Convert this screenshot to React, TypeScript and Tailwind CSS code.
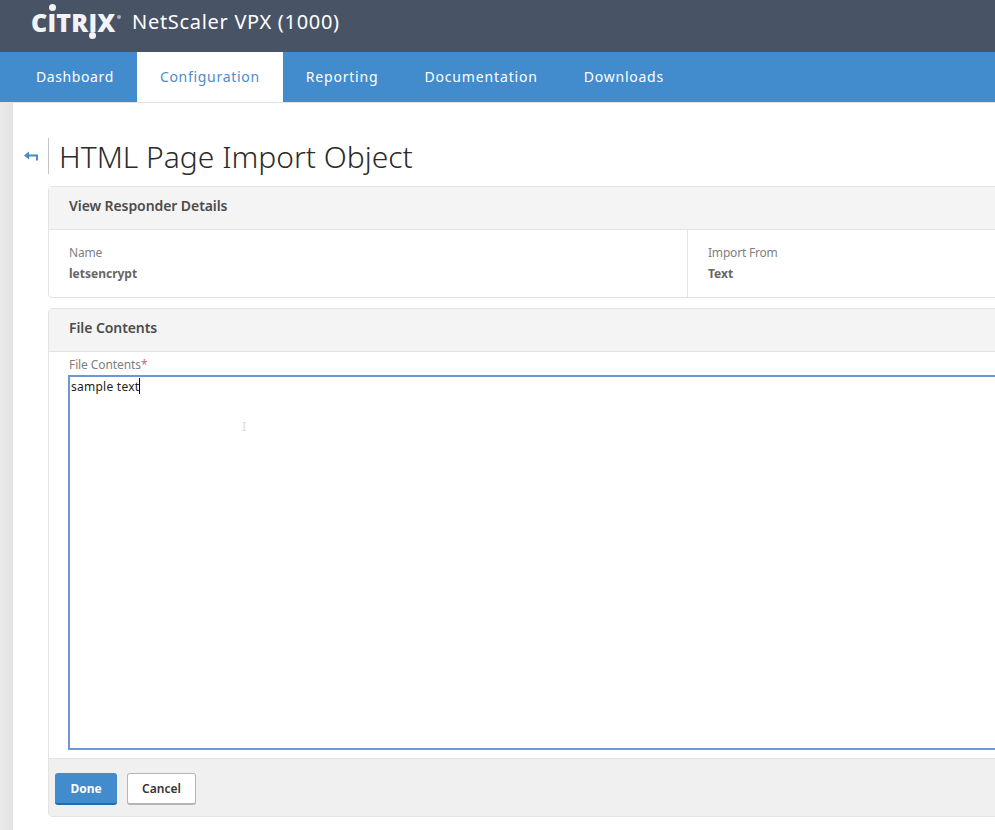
import React from "react";

const font = { fontFamily: '"Noto Sans", "Open Sans", sans-serif' };

function Logo() {
  return (
    <div className="relative w-[86px] h-[40px] mr-[10px] shrink-0">
      <span className="absolute left-[-1px] top-[5px] text-[25px] leading-[30px] font-extrabold tracking-[0.2px] text-[#f2f3f5]" style={{ fontFamily: '"Open Sans", sans-serif' }}>
        CITRIX
      </span>
      <span className="absolute left-[17px] top-[2px] w-[7px] h-[7px] rounded-full bg-[#f2f3f5]" />
      <span className="absolute left-[57px] top-[30px] w-[7px] h-[7px] rounded-full bg-[#f2f3f5]" />
      <span className="absolute left-[85px] top-[13px] w-[4px] h-[4px] rounded-full bg-[#aab0bb]" />
    </div>
  );
}

function NavItem({ label, active, tracking }: { label: string; active?: boolean; tracking: string }) {
  return (
    <div className={`h-full px-[23px] pb-[1px] flex items-center text-[14px] ${tracking} ${active ? "bg-white text-[#4f8bc9]" : "text-white"}`}>
      {label}
    </div>
  );
}

function PanelHeader({ title }: { title: string }) {
  return (
    <div className="h-[43px] flex items-center pb-[6px] pl-[20px] bg-[#f4f4f4] border-b border-[#e3e3e3] text-[14px] tracking-[-0.08px] font-semibold text-[#4c4c4c]">
      {title}
    </div>
  );
}

function Field({ label, value, className }: { label: string; value: string; className: string }) {
  return (
    <div className={className}>
      <div className="text-[12px] leading-[16px] tracking-[-0.2px] text-[#808080]">{label}</div>
      <div className="text-[12px] leading-[16px] mt-[5px] font-bold text-[#666666]">{value}</div>
    </div>
  );
}

export default function App() {
  return (
    <div className="w-[995px] h-[830px] overflow-hidden bg-white flex flex-col" style={font}>
      <header className="h-[52px] shrink-0 bg-[#495366] flex items-center pl-[32px] pb-[8px]">
        <Logo />
        <div className="text-[20px] leading-[28px] tracking-[0.7px] text-white ml-[4px]">NetScaler VPX (1000)</div>
      </header>
      <nav className="h-[50px] shrink-0 bg-[#428bcd] flex items-center pl-[13px]">
        <NavItem label="Dashboard" tracking="tracking-[0.6px]" />
        <NavItem label="Configuration" active tracking="tracking-[0.7px]" />
        <NavItem label="Reporting" tracking="tracking-[0.8px]" />
        <NavItem label="Documentation" tracking="tracking-[0.85px]" />
        <NavItem label="Downloads" tracking="tracking-[0.75px]" />
      </nav>
      <div className="flex-1 flex min-h-0 border-t border-[#e3e3e3]">
        <div className="w-[13px] shrink-0 bg-gradient-to-r from-[#ebebeb] to-[#e2e2e2]" />
        <main className="flex-1 min-w-0 flex flex-col pl-[10px] pt-[35px]">
          <div className="flex items-center h-[36px]">
            <svg width="14" height="10" viewBox="0 0 14 10" className="ml-[1px] mr-[10px]" fill="none">
              <path d="M0 4.5 L5 0.5 V3.5 H14 V9.5 H12 V5.5 H5 V8.5 Z" fill="#4a88c7" />
            </svg>
            <div className="w-px h-[36px] bg-[#c4c4c4]" />
            <h1 className="ml-[10px] pt-[2px] text-[30px] leading-[36px] font-light text-[#2b2b2b]">HTML Page Import Object</h1>
          </div>
          <div className="w-[1000px] ml-[25px] mt-[12px] border border-[#e3e3e3] rounded-[4px]">
            <PanelHeader title="View Responder Details" />
            <div className="flex h-[67px]">
              <Field label="Name" value="letsencrypt" className="w-[639px] pl-[20px] pt-[15px] border-r border-[#e3e3e3]" />
              <Field label="Import From" value="Text" className="pl-[20px] pt-[15px]" />
            </div>
          </div>
          <div className="w-[1000px] ml-[25px] mt-[10px] border border-[#e3e3e3] rounded-[4px] flex flex-col h-[509px]">
            <PanelHeader title="File Contents" />
            <div className="flex-1 min-h-0 pl-[19px] border-b border-[#e3e3e3]">
              <div className="text-[12px] leading-[16px] pt-[5px] pl-[1px] tracking-[-0.1px] text-[#808080]">File Contents<span className="text-[#b87070]">*</span></div>
              <div className="relative h-[375px] mt-[2px] border-2 border-[#6f94d8] pl-[1px] pt-[1px] text-[12px] leading-[17px] tracking-[0.25px] text-[#222222]">
                <span>sample text</span>
                <span className="inline-block w-px h-[16px] bg-black align-top" />
                <span className="absolute left-[172px] top-[41px] text-[13px] leading-[16px] text-[#dddddd]">I</span>
              </div>
            </div>
            <div className="h-[57px] shrink-0 bg-[#f0f0f0] flex items-center gap-[10px] pl-[6px] pt-[2px]">
              <button className="w-[62px] h-[32px] pt-[2px] rounded-[3px] bg-[#428bcd] border-b-2 border-[#1f6cb5] text-white text-[12px] font-bold">Done</button>
              <button className="w-[69px] h-[32px] pt-[1px] rounded-[3px] bg-white border border-[#b5b5b5] border-b-2 text-[#333333] text-[12px] font-semibold">Cancel</button>
            </div>
          </div>
        </main>
      </div>
    </div>
  );
}
